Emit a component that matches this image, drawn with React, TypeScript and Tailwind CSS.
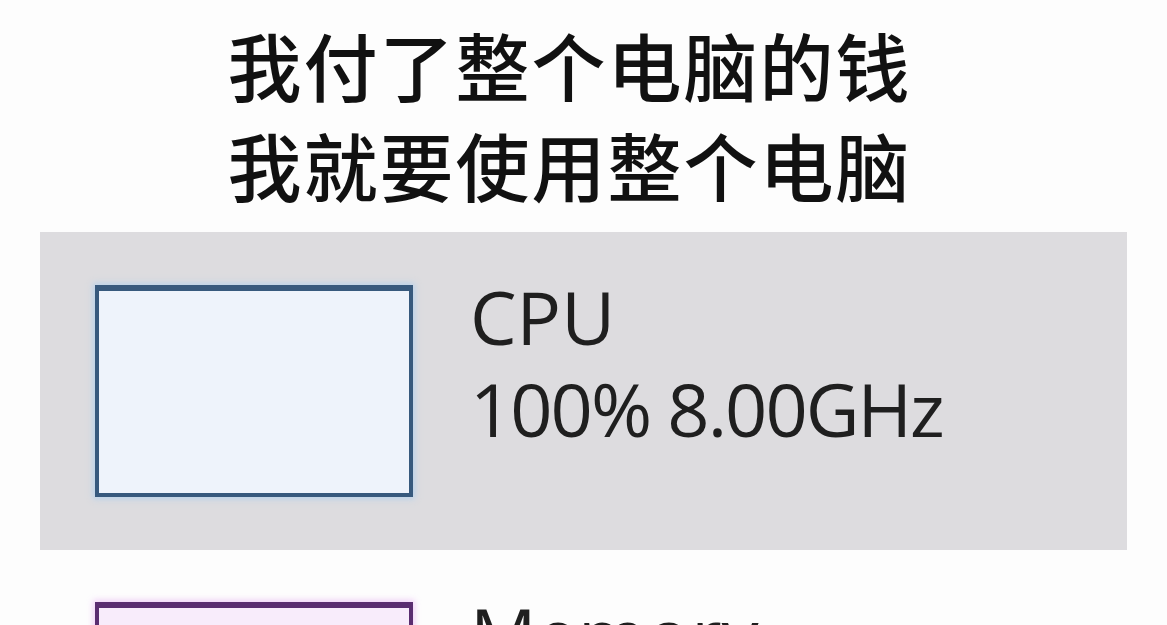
import React from "react";

type Resource = {
  name: string;
  detail?: string;
  selected?: boolean;
  frame: string;
  fill: string;
  glow: string;
};

const resources: Resource[] = [
  {
    name: "CPU",
    detail: "100% 8.00GHz",
    selected: true,
    frame: "border-[#37597d] border-t-[6px]",
    fill: "bg-[#eef3fb]",
    glow: "shadow-[0_0_6px_2px_rgba(170,205,240,0.7)]",
  },
  {
    name: "Memory",
    frame: "border-[#5a2d70] border-t-[6px]",
    fill: "bg-[#f8ecfb]",
    glow: "shadow-[0_0_6px_2px_rgba(235,190,245,0.7)]",
  },
];

function ResourceRow({ r }: { r: Resource }) {
  return (
    <div
      className={`flex items-start pl-[55px] ${
        r.selected ? "bg-[#dddcdf] pt-[53px] h-[318px]" : "pt-[52px] h-[260px]"
      }`}
    >
      <div className={`w-[318px] h-[212px] shrink-0 border-[4px] ${r.frame} ${r.fill} ${r.glow}`} />
      <div
        className="ml-[57px] -mt-[14px] text-[#1f1f1f] text-[74px] leading-[92px]"
        style={{ fontFamily: '"Open Sans", "Noto Sans", sans-serif' }}
      >
        <div className="tracking-[0px]">{r.name}</div>
        {r.detail && <div className="tracking-[-2px]">{r.detail}</div>}
      </div>
    </div>
  );
}

export default function App() {
  return (
    <div className="w-[1167px] h-[625px] overflow-hidden bg-[#fdfdfd]">
      <div
        className="pt-[14px] pr-[28px] text-center text-[#111] text-[74px] leading-[100px] font-medium tracking-[2px]"
        style={{ fontFamily: '"Noto Sans CJK SC", sans-serif' }}
      >
        <div>我付了整个电脑的钱</div>
        <div>我就要使用整个电脑</div>
      </div>
      <div className="mt-[18px] mx-[40px]">
        {resources.map((r) => (
          <ResourceRow key={r.name} r={r} />
        ))}
      </div>
    </div>
  );
}
